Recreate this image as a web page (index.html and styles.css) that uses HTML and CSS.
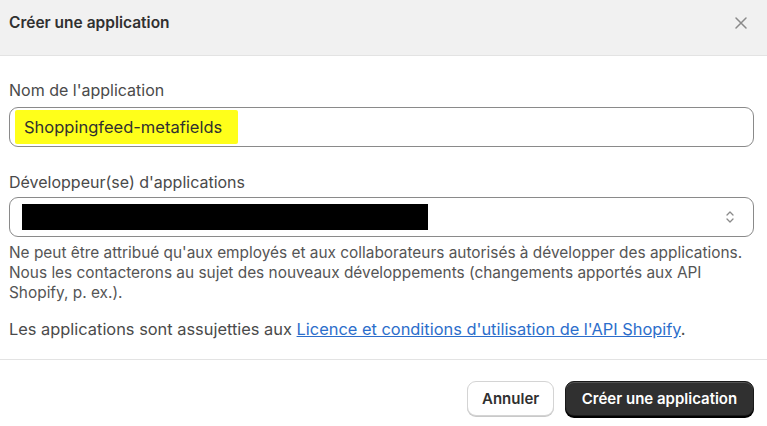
FILE: index.html
```html
<!DOCTYPE html>
<html lang="fr">
<head>
<meta charset="UTF-8">
<title>Créer une application</title>
<link rel="stylesheet" href="styles.css">
</head>
<body>
<div class="modal">
	<div class="modal-header">
		<h2 class="modal-title">Créer une application</h2>
		<button class="close-btn" aria-label="Fermer">
			<svg width="14" height="14" viewBox="0 0 14 14"><path d="M2 2L12 12M12 2L2 12" stroke="#8a8a8a" stroke-width="1.5" stroke-linecap="round"/></svg>
		</button>
	</div>

	<div class="modal-body">
		<div class="field">
			<label class="field-label">Nom de l'application</label>
			<div class="text-input">
				<span class="highlight">Shoppingfeed-metafields</span>
			</div>
		</div>

		<div class="field">
			<label class="field-label">Développeur(se) d'applications</label>
			<div class="select-input">
				<span class="redacted"></span>
				<svg class="chevrons" width="10" height="16" viewBox="0 0 10 16"><path d="M2 6L5 3L8 6M2 10L5 13L8 10" fill="none" stroke="#8a8a8a" stroke-width="1.3" stroke-linecap="round" stroke-linejoin="round"/></svg>
			</div>
			<p class="help-text">Ne peut être attribué qu'aux employés et aux collaborateurs autorisés à développer des applications. Nous les contacterons au sujet des nouveaux développements (changements apportés aux API Shopify, p. ex.).</p>
		</div>

		<p class="terms">Les applications sont assujetties aux <a href="#">Licence et conditions d'utilisation de l'API Shopify</a>.</p>
	</div>

	<div class="modal-footer">
		<button class="btn btn-secondary">Annuler</button>
		<button class="btn btn-primary">Créer une application</button>
	</div>
</div>
</body>
</html>
```

FILE: styles.css
```css
body {
	margin: 0;
	padding: 0;
	background: #ffffff;
	font-family: Inter, "Noto Sans", sans-serif;
	color: #303030;
}

.modal {
	width: 767px;
	height: 426px;
	background: #ffffff;
	overflow: hidden;
}

.modal-header {
	height: 56px;
	box-sizing: border-box;
	background: #f1f1f1;
	border-bottom: 1px solid #e3e3e3;
	display: flex;
	align-items: center;
	justify-content: space-between;
	padding: 0 19px 10px 9px;
}

.modal-title {
	margin: 0;
	font-size: 15.5px;
	font-weight: 600;
	color: #303030;
}

.close-btn {
	border: 0;
	background: none;
	padding: 0;
	display: flex;
}

.modal-body {
	padding: 24px 13px 20px 9px;
}

.field {
	margin-bottom: 16px;
}

.field-label {
	display: block;
	font-size: 16px;
	line-height: 20px;
	color: #4a4a4a;
	margin-bottom: 7px;
}

.text-input,
.select-input {
	height: 40px;
	box-sizing: border-box;
	border: 1px solid #8a8a8a;
	border-radius: 9px;
	display: flex;
	align-items: center;
	padding: 0 5px;
}

.text-input {
	margin-bottom: 25px;
}

.highlight {
	background: #ffff1a;
	font-size: 16.5px;
	line-height: 34px;
	padding: 0 16px 0 9px;
	color: #303030;
	border-radius: 2px;
}

.select-input {
	justify-content: space-between;
	padding: 0 18px 0 12px;
	margin-top: -2px;
}

.redacted {
	display: block;
	width: 406px;
	height: 26px;
	background: #000000;
}

.help-text {
	margin: 6px 0 0 0;
	font-size: 15.4px;
	line-height: 20px;
	color: #555555;
}

.terms {
	margin: 0;
	font-size: 16.4px;
	line-height: 20px;
	color: #4a4a4a;
}

.terms a {
	color: #2c6ecb;
	text-decoration: underline;
}

.modal-footer {
	border-top: 1px solid #e3e3e3;
	display: flex;
	justify-content: flex-end;
	gap: 11px;
	padding: 21px 13px 0 9px;
}

.btn {
	height: 35px;
	border-radius: 9px;
	font-family: Inter, "Noto Sans", sans-serif;
	font-size: 15px;
	font-weight: 600;
	padding: 0 14px;
}

.btn-secondary {
	background: #ffffff;
	color: #303030;
	border: 1px solid #d4d4d4;
	box-shadow: 0 1px 0 #c9c9c9;
	width: 87px;
}

.btn-primary {
	background: #303030;
	color: #ffffff;
	border: 1px solid #1a1a1a;
	box-shadow: 0 2px 0 #000000, inset 0 1px 0 #555555;
	width: 189px;
}
```
